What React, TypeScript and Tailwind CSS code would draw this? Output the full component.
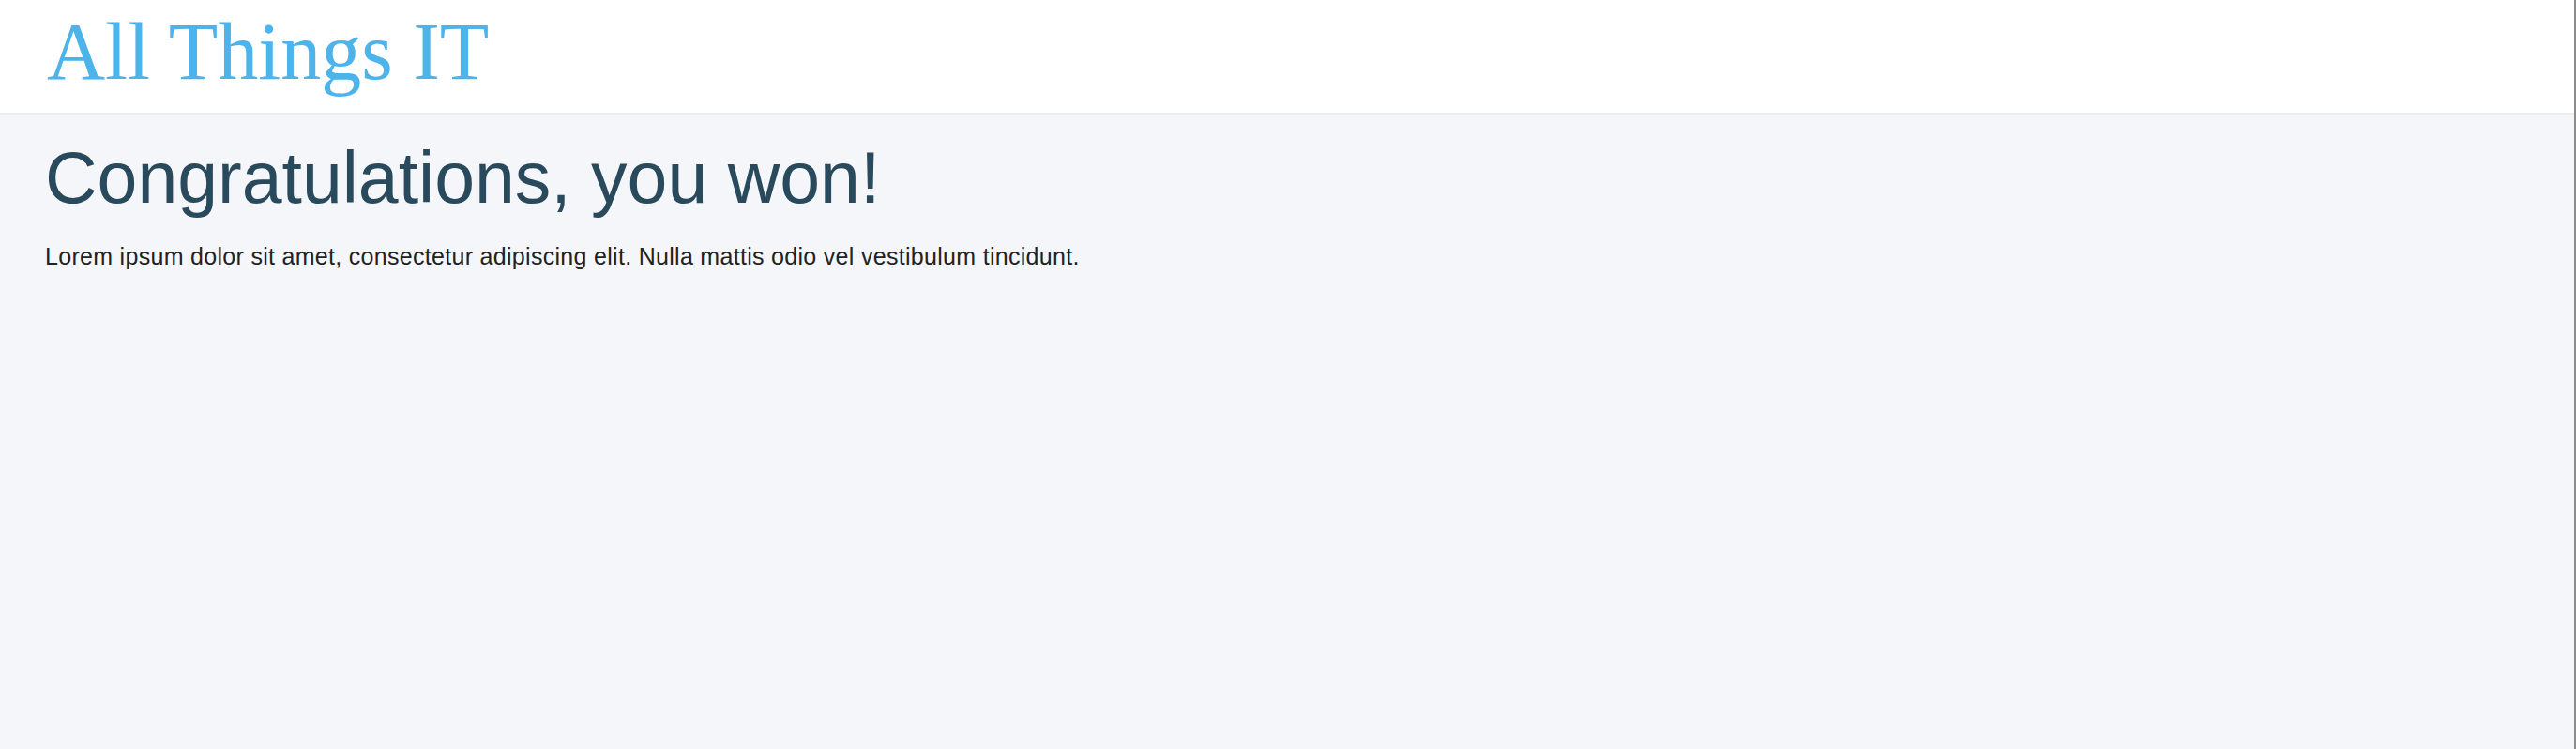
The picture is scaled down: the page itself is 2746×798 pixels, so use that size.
import React from 'react';

export default function App(): JSX.Element {
  return (
    <div className="flex min-h-[798px] w-full flex-col border-r-2 border-[#8c8c8c] bg-[#f5f6fa]">
      <header className="h-[122px] border-b-2 border-[#ececec] bg-white pl-[50px] pt-[12px]">
        <h1 className="font-['Liberation_Serif',serif] text-[86px] leading-none text-[#4cb3eb]">
          All Things IT
        </h1>
      </header>
      <main className="px-[48px] pt-[29px]">
        <h2 className="font-['Liberation_Sans',Arial,sans-serif] text-[77px] leading-none text-[#284a5c]">
          Congratulations, you won!
        </h2>
        <p className="mt-[33px] font-['Liberation_Sans',Arial,sans-serif] text-[25px] leading-none tracking-[0.3px] text-[#222222]">
          Lorem ipsum dolor sit amet, consectetur adipiscing elit. Nulla mattis odio vel vestibulum tincidunt.
        </p>
      </main>
    </div>
  );
}
